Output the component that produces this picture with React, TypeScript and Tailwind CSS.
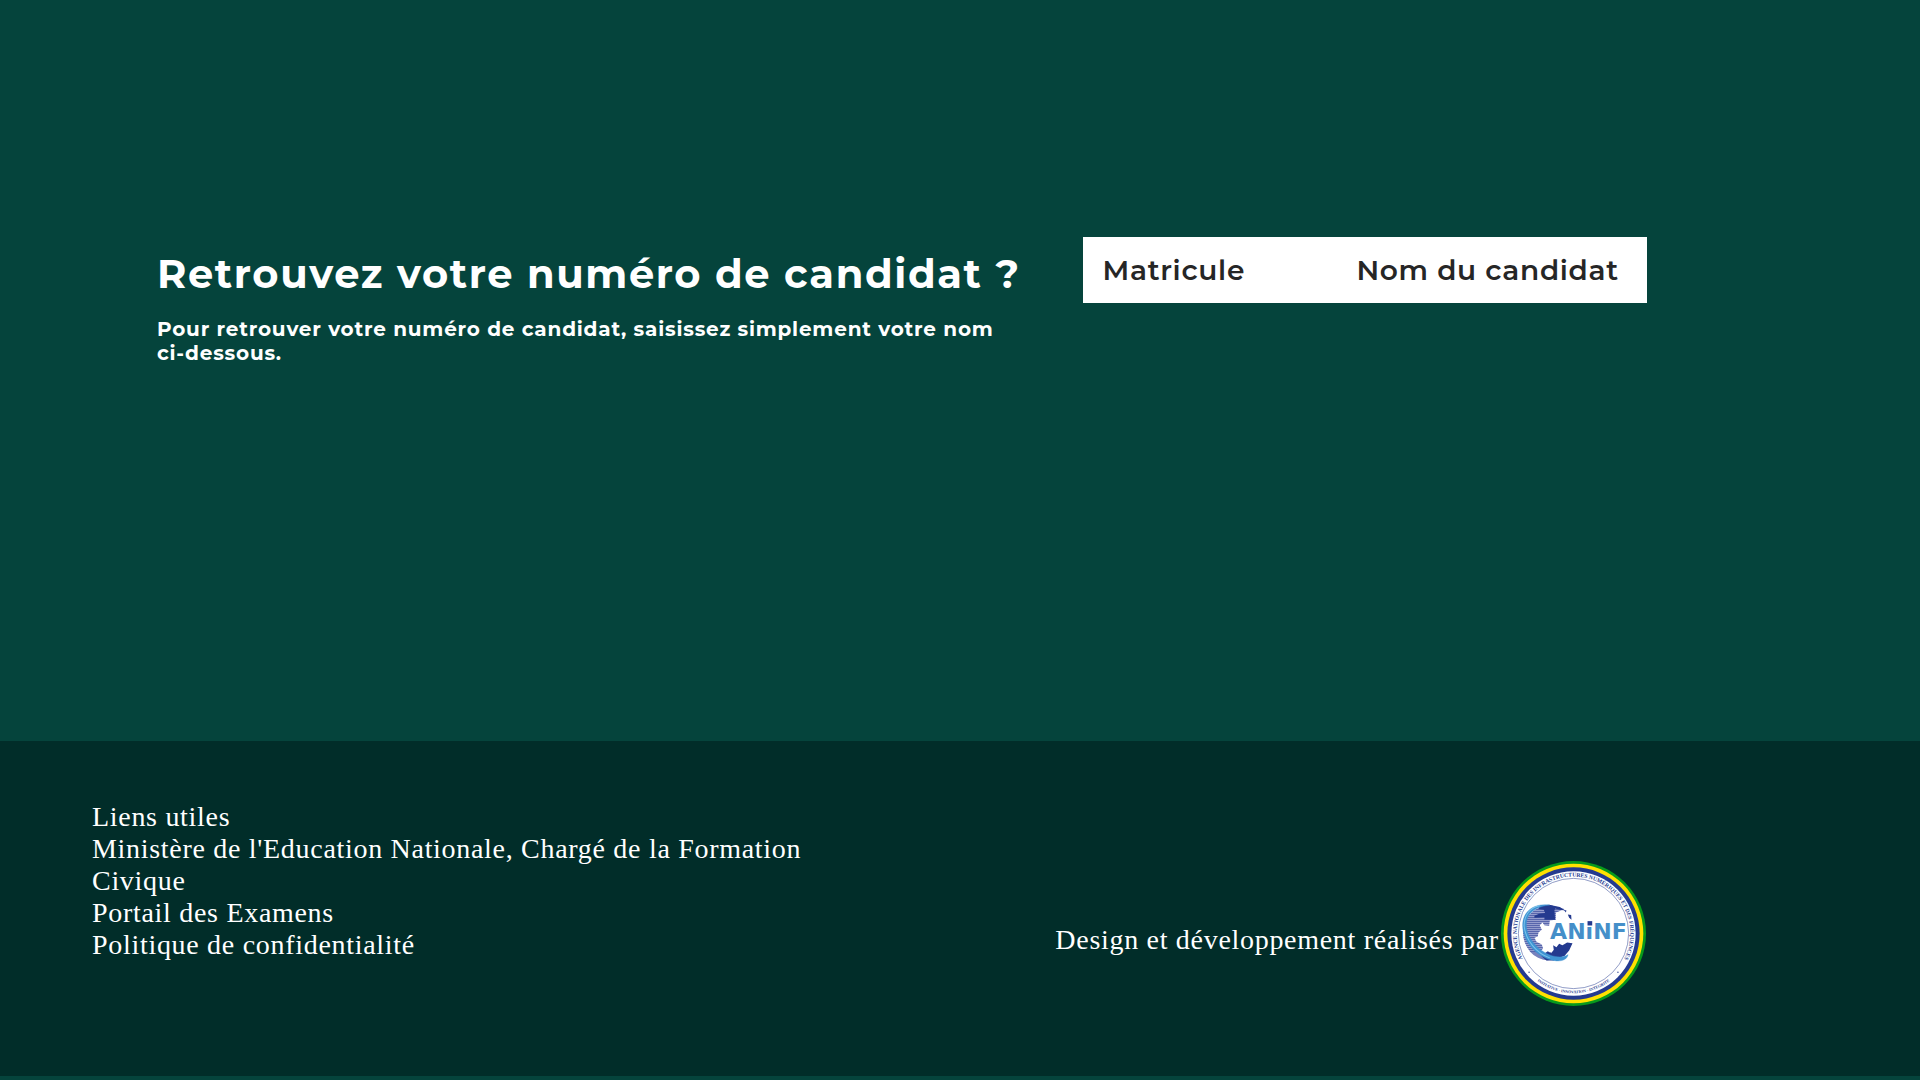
const links = [
  { label: "Ministère de l'Education Nationale, Chargé de la Formation Civique", href: "#ministere" },
  { label: "Portail des Examens", href: "#examens" },
  { label: "Politique de confidentialité", href: "#confidentialite" },
];

function AninfLogo() {
  const stripes = Array.from({ length: 28 }, (_, i) => 134 + i * 6);

  return (
    <svg viewBox="0 0 434 434" className="size-[145px] shrink-0 tracking-normal" role="img" aria-label="ANINF">
      <defs>
        <path id="ring-top" d="M 79 316 A 170 170 0 1 1 355 316" />
        <path id="ring-bottom" d="M 38 217 A 179 179 0 0 0 396 217" />
        <clipPath id="globe">
          <path d="M66 214 A80 84 0 0 1 146 132 L190 144 L176 150 L164 154 L164 176 L146 178 L144 194 L130 192 L124 184 L116 192 L122 206 L112 214 L110 226 L100 230 L106 242 L122 250 L126 262 L120 268 L134 280 L150 272 L154 292 L140 298 A80 84 0 0 1 66 214 Z" />
        </clipPath>
      </defs>

      {/* Outer rings */}
      <circle cx="217" cy="217" r="217" fill="#089a1c" />
      <circle cx="217" cy="217" r="209" fill="#ffe000" />
      <circle cx="217" cy="217" r="198" fill="#243a8f" />
      <circle cx="217" cy="217" r="186" fill="#ffffff" />
      <circle cx="217" cy="217" r="165" fill="none" stroke="#243a8f" strokeWidth="1.5" />

      <text fill="#243a8f" fontFamily="Liberation Serif, serif" fontWeight="700" fontSize="17">
        <textPath href="#ring-top" startOffset="50%" textAnchor="middle">
          AGENCE NATIONALE DES INFRASTRUCTURES NUMÉRIQUES ET DES FRÉQUENCES
        </textPath>
      </text>
      <text fill="#243a8f" fontFamily="Liberation Serif, serif" fontWeight="700" fontSize="12">
        <textPath href="#ring-bottom" startOffset="50%" textAnchor="middle">
          INITIATIVE - INNOVATION - INTEGRITE
        </textPath>
      </text>
      <circle cx="84" cy="333" r="2" fill="#243a8f" />
      <circle cx="350" cy="333" r="2" fill="#243a8f" />

      {/* Globe */}
      <g clipPath="url(#globe)">
        <rect x="50" y="120" width="170" height="190" fill="#b4bade" />
        {stripes.map((y) => (
          <path key={y} d={`M50 ${y} H220`} stroke="#3a4a9b" strokeWidth="3" />
        ))}
      </g>
      <path d="M116 134 L144 131 L176 138 L192 148 L176 146 L162 142 L160 148 L162 176 L130 176 L130 168 L100 170 L100 164 L114 158 L132 156 L128 146 L112 144 Z" fill="#243a8f" />
      <path d="M188 146 L196 148 L194 154 Z M200 160 L210 162 L211 176 L204 170 Z" fill="#243a8f" />
      <path d="M118 268 L128 278 L140 270 L150 276 L158 266 L156 252 L166 258 L174 248 L184 252 L198 244 L214 246 L204 268 L190 284 L172 290 L158 298 L136 298 L122 286 Z" fill="#243a8f" />

      {/* Orbit */}
      <path
        d="M146 132 C112 126 74 140 66 178 C56 230 102 292 166 299 C186 300 198 294 201 280 C188 290 166 288 148 282 C98 262 68 212 78 176 C86 148 114 135 146 132 Z"
        fill="#3f93d2"
        stroke="#3f93d2"
        strokeWidth="1"
      />
      <path d="M116 134 C90 138 70 158 69 194 C74 238 106 276 146 290" fill="none" stroke="#7cc3ea" strokeWidth="3" />

      <text x="147" y="232" fill="#458fc9" fontFamily="DejaVu Sans, sans-serif" fontWeight="700" fontSize="66">
        ANıNF
      </text>
      <rect x="259" y="180" width="14" height="13" fill="#243a8f" />
    </svg>
  );
}

export default function App() {
  return (
    <div className="flex flex-col min-h-screen bg-[#05443c] pb-1 text-white">
      <main className="flex flex-1 items-start pt-[237px] pl-[157px] font-[Montserrat,Inter,sans-serif]">
        <section className="w-[52.5%] pt-4 pr-14">
          <h1 className="text-[40px] leading-[42px] font-bold tracking-[0.04em] whitespace-nowrap">
            Retrouvez votre numéro de candidat ?
          </h1>
          <p className="mt-[22px] text-xl leading-6 font-bold tracking-[0.04em]">
            Pour retrouver votre numéro de candidat, saisissez simplement votre nom ci-dessous.
          </p>
        </section>

        <table className="w-[32%] bg-white text-left text-[28px] leading-[34px] tracking-wide text-[#262626]">
          <thead>
            <tr>
              <th scope="col" className="w-[45%] py-4 pl-5 font-semibold">Matricule</th>
              <th scope="col" className="py-4 pl-5 font-semibold whitespace-nowrap">Nom du candidat</th>
            </tr>
          </thead>
        </table>
      </main>

      <footer className="flex items-start bg-[#012d29] pt-15 pb-[70px] pl-[92px] font-['Liberation_Serif',serif] text-[28px] leading-8 tracking-wide">
        <nav aria-labelledby="footer-links" className="w-[52.7%] pr-40">
          <h2 id="footer-links">Liens utiles</h2>
          <ul>
            {links.map((link) => (
              <li key={link.href}>
                <a href={link.href} className="hover:underline">{link.label}</a>
              </li>
            ))}
          </ul>
        </nav>

        <div className="flex items-center gap-0.5 pt-15">
          <p className="pt-3">Design et développement réalisés par</p>
          <AninfLogo />
        </div>
      </footer>
    </div>
  );
}
